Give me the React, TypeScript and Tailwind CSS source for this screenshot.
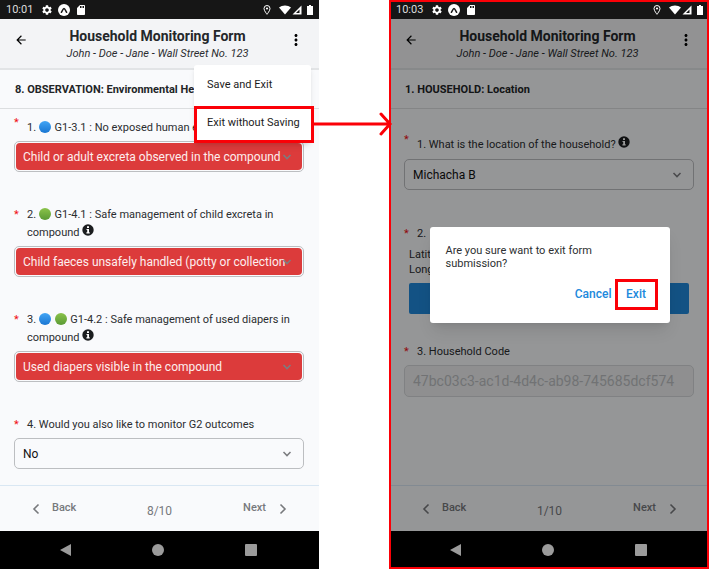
import type { ReactNode } from "react";
import { MdSettings, MdSdCard, MdArrowBack, MdMoreVert } from "react-icons/md";

const fieldBox = "relative h-[31px] rounded-[5px] border border-[#bcbec1]";

function StatusBar({ time }: { time: string }) {
  return (
    <div className="flex h-[19px] items-center bg-[#161616] px-[6px] text-white">
      <span className="w-[35px] text-[11px] leading-[18px] text-[#dddddd]">{time}</span>
      <MdSettings className="size-[12px]" />
      <svg viewBox="0 0 12 12" className="ml-[5px] size-[12px]">
        <circle cx="6" cy="6" r="6" fill="#fff" />
        <path d="M3.400 8.300C4.400 7 4.900 4.400 6 4.400S7.600 7 8.600 8.300" fill="none" stroke="#161616" strokeWidth="1.500" strokeLinecap="round" />
      </svg>
      <MdSdCard className="ml-[5px] size-[12px]" />
      <svg viewBox="0 0 10 12" className="ml-auto h-[12px] w-[10px]">
        <path d="M5 1.500a3 3 0 0 0-3 3c0 2.200 3 5.800 3 5.800s3-3.600 3-5.800a3 3 0 0 0-3-3z" fill="none" stroke="#fff" strokeWidth="1" />
        <circle cx="5" cy="4.500" r="1.100" fill="#fff" />
      </svg>
      <svg viewBox="0 0 12 10" className="ml-[7px] h-[10px] w-[12px]">
        <path d="M0 2.500C3.200-.3 8.800-.3 12 2.500L6 9.500z" fill="#fff" />
      </svg>
      <svg viewBox="0 0 10 10" className="ml-[1px] h-[10px] w-[10px]">
        <path d="M9.500.5v9H.5z" fill="#fff" />
        <path d="M7.500 4.500v3.500H4z" fill="#161616" />
      </svg>
      <svg viewBox="0 0 6 10" className="ml-[5px] h-[10px] w-[6px]">
        <path d="M2 0h2v1h2v9H0V1h2z" fill="#fff" />
      </svg>
    </div>
  );
}

function Header() {
  return (
    <header className="flex h-[51px] items-center justify-between border-b-2 border-[#e2e4e6] bg-[#f3f4f6] px-[14px]">
      <button aria-label="Go back" className="pb-[7px] text-black">
        <MdArrowBack className="size-[14px]" />
      </button>
      <div className="pt-[3px] text-center">
        <h1 className="text-[14px] leading-[18px] font-bold text-[#24272a]">Household Monitoring Form</h1>
        <p className="text-[11px] leading-[18px] text-[#2b2d30] italic">John - Doe - Jane - Wall Street No. 123</p>
      </div>
      <button aria-label="More options" className="pb-[7px] text-black">
        <MdMoreVert className="size-[18px]" />
      </button>
    </header>
  );
}

function SectionTitle({ children }: { children: ReactNode }) {
  return (
    <h2 className="h-[39px] overflow-hidden border-b border-[#dcdee0] px-[15px] text-[11px] leading-[40px] font-bold whitespace-nowrap text-[#222527]">
      {children}
    </h2>
  );
}

function Info() {
  return (
    <svg viewBox="0 0 12 12" role="img" aria-label="More information" className="-my-[4px] inline-block size-[12px] align-[4px]">
      <circle cx="6" cy="6" r="5.700" fill="#1b1d1f" />
      <path d="M5 2.300h2v1.600H5zM4.500 4.900H7v3.300h.7v1.200H4.400V8.200h.8V6h-.7z" fill="#fff" />
    </svg>
  );
}

function Blue() {
  return <span className="mr-px inline-block size-[12px] rounded-full bg-linear-to-b from-[#42a5f5] to-[#1976d2] align-[-2px]" />;
}

function Green() {
  return <span className="mr-px inline-block size-[12px] rounded-full bg-linear-to-b from-[#8bc34a] to-[#5a9a35] align-[-2px]" />;
}

function QuestionLabel({ id, raised, children }: { id?: string; raised?: boolean; children: ReactNode }) {
  return (
    <label htmlFor={id} className="flex text-[11px] leading-[18px] text-[#2b2d30]">
      <span className="w-[13px] shrink-0 text-[#f01010]">*</span>
      <span className={raised ? "pt-[5px] whitespace-nowrap" : ""}>{children}</span>
    </label>
  );
}

function Chevron() {
  return (
    <svg viewBox="0 0 10 6" className="pointer-events-none absolute top-1/2 right-[11px] h-[6px] w-[10px] -translate-y-1/2">
      <path d="M1.500 1L5 4.600 8.500 1" fill="none" stroke="#7c7d80" strokeWidth="1.500" />
    </svg>
  );
}

function SelectField({ id, value, danger }: { id: string; value: string; danger?: boolean }) {
  return (
    <div className={fieldBox}>
      <div className="h-full p-[1px]">
        <select
          id={id}
          defaultValue={value}
          className={
            danger
              ? "block h-full w-full appearance-none rounded-[4px] bg-[#dc3b3b] px-[7px] text-[12px] text-[#fdeeee]"
              : "block h-full w-full appearance-none rounded-[4px] bg-transparent px-[7px] text-[12px] text-[#111]"
          }
        >
          <option>{value}</option>
        </select>
      </div>
      <Chevron />
    </div>
  );
}

function Footer({ page }: { page: string }) {
  return (
    <footer className="grid h-[46px] grid-cols-3 items-center border-t border-[#d9e7f3] px-[31px] text-[11px] font-medium text-[#77797c]">
      <button className="flex items-center gap-[9px] justify-self-start">
        <svg viewBox="0 0 12 12" className="size-[12px]">
          <path d="M7.500 1.500L3 6l4.500 4.500" fill="none" stroke="currentColor" strokeWidth="1.600" />
        </svg>
        Back
      </button>
      <span className="pt-[4px] text-center text-[12px] font-normal">{page}</span>
      <button className="flex items-center gap-[10px] justify-self-end">
        Next
        <svg viewBox="0 0 12 12" className="size-[12px]">
          <path d="M4.500 1.500L9 6l-4.500 4.500" fill="none" stroke="currentColor" strokeWidth="1.600" />
        </svg>
      </button>
    </footer>
  );
}

function NavBar() {
  return (
    <nav className="flex h-[38px] items-center justify-between bg-black pr-[61px] pl-[59px]">
      <button aria-label="Back">
        <svg viewBox="0 0 13 14" className="h-[14px] w-[13px]"><path d="M12 1v12L1 7z" fill="#9b9b9b" /></svg>
      </button>
      <button aria-label="Home">
        <svg viewBox="0 0 14 14" className="size-[14px]"><circle cx="7" cy="7" r="6" fill="#9b9b9b" /></svg>
      </button>
      <button aria-label="Recent apps">
        <svg viewBox="0 0 14 14" className="size-[14px]"><rect x="1" y="1" width="12" height="12" rx="1" fill="#9b9b9b" /></svg>
      </button>
    </nav>
  );
}

function ObservationScreen() {
  return (
    <section className="relative flex flex-col bg-[#f9fafc]">
      <StatusBar time="10:01" />
      <div className="flex flex-1 flex-col">
        <Header />
        <SectionTitle>8. OBSERVATION: Environmental Health</SectionTitle>
        <form className="flex flex-1 flex-col gap-[34px] px-[14px] pt-[5px] pr-[15px] pb-[14px]">
          <div className="flex flex-col gap-[4px]">
            <QuestionLabel id="q1" raised>1. <Blue /> G1-3.1 : No exposed human excreta</QuestionLabel>
            <SelectField id="q1" value="Child or adult excreta observed in the compound" danger />
          </div>
          <div className="flex flex-col gap-[4px]">
            <QuestionLabel id="q2">2. <Green /> G1-4.1 : Safe management of child excreta in compound <Info /></QuestionLabel>
            <SelectField id="q2" value="Child faeces unsafely handled (potty or collection" danger />
          </div>
          <div className="flex flex-col gap-[4px]">
            <QuestionLabel id="q3">3. <Blue /> <Green /> G1-4.2 : Safe management of used diapers in compound <Info /></QuestionLabel>
            <SelectField id="q3" value="Used diapers visible in the compound" danger />
          </div>
          <div className="flex flex-col gap-[4px]">
            <QuestionLabel id="q4">4. Would you also like to monitor G2 outcomes</QuestionLabel>
            <SelectField id="q4" value="No" />
          </div>
        </form>
        <Footer page="8/10" />
      </div>
      <NavBar />
      <div className="absolute top-[65px] right-[8px] w-[117px] rounded-[3px] bg-white text-[11px] text-[#1c1c1c] shadow-md">
        <button className="block h-[41px] w-full px-[13px] text-left">Save and Exit</button>
        <button className="block h-[37px] w-[120px] border-3 border-[#fb0007] bg-white px-[10px] pb-[3px] text-left whitespace-nowrap">
          Exit without Saving
        </button>
      </div>
    </section>
  );
}

function LocationScreen() {
  return (
    <section className="relative flex flex-col bg-[#f9fafc] pl-px">
      <StatusBar time="10:03" />
      <div className="relative flex flex-1 flex-col">
        <Header />
        <SectionTitle>1. HOUSEHOLD: Location</SectionTitle>
        <form className="flex flex-1 flex-col gap-[28px] px-[14px] pt-[22px] pr-[15px]">
          <div className="flex flex-col gap-[5px]">
            <QuestionLabel id="location" raised>1. What is the location of the household? <Info /></QuestionLabel>
            <SelectField id="location" value="Michacha B" />
          </div>
          <div className="flex flex-col gap-[4px] pt-[7px]">
            <QuestionLabel>2.</QuestionLabel>
            <div className="px-[5px] text-[11px] leading-[15px] text-[#2b2d30]">
              <p>Latitude</p>
              <p>Longitude</p>
              <button type="button" aria-label="Get location" className="mt-[6px] block h-[31px] w-full rounded-[2px] bg-[#2089dc]" />
            </div>
          </div>
          <div className="flex flex-col gap-[4px] pt-px">
            <QuestionLabel id="code">3. Household Code</QuestionLabel>
            <input
              id="code"
              disabled
              defaultValue="47bc03c3-ac1d-4d4c-ab98-745685dcf574"
              className="h-[32px] w-full rounded-[5px] border border-[#d6d8da] bg-[#eeeff1] px-[8px] text-[14px] text-[#bdbfc2]"
            />
          </div>
        </form>
        <Footer page="1/10" />
        <div className="absolute inset-0 flex items-center justify-center bg-black/40">
          <div role="dialog" aria-label="Exit form" className="w-[240px] rounded-[3px] bg-white px-[12px] pt-[17px] pb-[13px] shadow-lg">
            <p className="pr-[40px] pl-[4px] text-[11px] leading-[13px] text-[#2d2f31]">Are you sure want to exit form submission?</p>
            <div className="mt-[9px] flex items-center justify-end text-[12px] font-medium text-[#2089dc]">
              <button className="pr-[3px] pb-[2px]">Cancel</button>
              <button className="h-[31px] w-[43px] border-3 border-[#fb0007] pb-[2px]">Exit</button>
            </div>
          </div>
        </div>
      </div>
      <NavBar />
      <div className="pointer-events-none absolute inset-0 border-2 border-[#fb0007]" />
    </section>
  );
}

export default function App() {
  return (
    <main className="grid min-h-screen grid-cols-[319fr_70px_320fr] bg-white font-[Roboto,'Liberation_Sans',sans-serif]">
      <ObservationScreen />
      <div className="relative">
        <svg viewBox="0 0 80 24" className="absolute top-[112px] left-[-6px] z-10 h-[24px] w-[80px]">
          <path d="M0 12h76M68 2l9 10-9 10" fill="none" stroke="#fb0007" strokeWidth="3" strokeLinecap="round" />
        </svg>
      </div>
      <LocationScreen />
    </main>
  );
}
